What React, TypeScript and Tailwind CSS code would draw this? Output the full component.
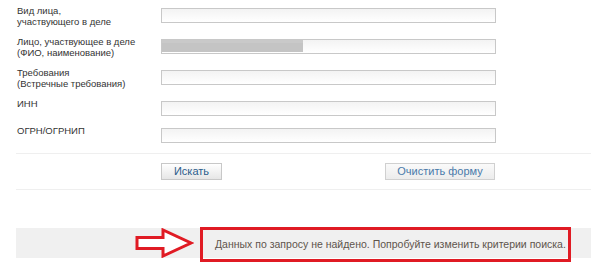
const rows = [
  { label: ['Вид лица,', 'участвующего в деле'], h: 'h-[31px]' },
  { label: ['Лицо, участвующее в деле', '(ФИО, наименование)'], h: 'h-[31px]', redacted: true },
  { label: ['Требования', '(Встречные требования)'], h: 'h-[31px]' },
  { label: ['ИНН'], h: 'h-[27px]' },
  { label: ['ОГРН/ОГРНИП'], h: 'h-[24px]' },
]

export default function App() {
  return (
    <div className="w-[591px] h-[276px] bg-white overflow-hidden font-['Liberation_Sans',Arial,sans-serif] text-[#333]">
      <div className="pt-[4px] pl-[17px]">
        {rows.map((r, i) => (
          <div key={i} className={`flex items-start ${r.h}`}>
            <div className="w-[144px] text-[9.5px] leading-[11px] pt-[1px]">
              {r.label.map((l, j) => (
                <div key={j}>{l}</div>
              ))}
            </div>
            <div className="mt-[4px] w-[335px] h-[15px] border border-[#c8c8c8] bg-gradient-to-b from-[#f3f3f3] to-white">
              {r.redacted && <div className="w-[141px] h-[12px] bg-[#c4c4c4] border-t-[3px] border-[#c9c9c9]" />}
            </div>
          </div>
        ))}
      </div>

      <div className="ml-[16px] mt-[5px] border-t border-[#efefef]" />
      <div className="flex items-center h-[35px] pl-[161px]">
        <button className="w-[61px] h-[17px] border border-[#c8c8c8] bg-gradient-to-b from-white to-[#e6e6e6] text-[11px] leading-none text-[#2b5d8c]">
          Искать
        </button>
        <button className="ml-[163px] w-[110px] h-[17px] border border-[#d0d0d0] bg-gradient-to-b from-[#fafafa] to-[#ececec] text-[11px] leading-none text-[#4a7aaa]">
          Очистить форму
        </button>
      </div>
      <div className="ml-[16px] border-t border-[#efefef]" />

      <div className="ml-[16px] mt-[38px] h-[30px] bg-[#f0f0f0] flex items-center pl-[119px]">
        <svg width="59" height="30" viewBox="0 0 59 30" className="shrink-0">
          <polygon
            points="2,9.5 28,9.5 28,2 56,15 28,28 28,20.5 2,20.5"
            fill="white"
            stroke="#e01b24"
            strokeWidth="3"
          />
        </svg>
        <div className="ml-[6px] mt-[3px] shrink-0 w-[371px] h-[35px] border-[3px] border-[#e01b24] flex items-center pl-[12px]">
          <span className="text-[10.5px] text-[#5e544c] whitespace-nowrap">
            Данных по запросу не найдено. Попробуйте изменить критерии поиска.
          </span>
        </div>
      </div>
    </div>
  )
}
